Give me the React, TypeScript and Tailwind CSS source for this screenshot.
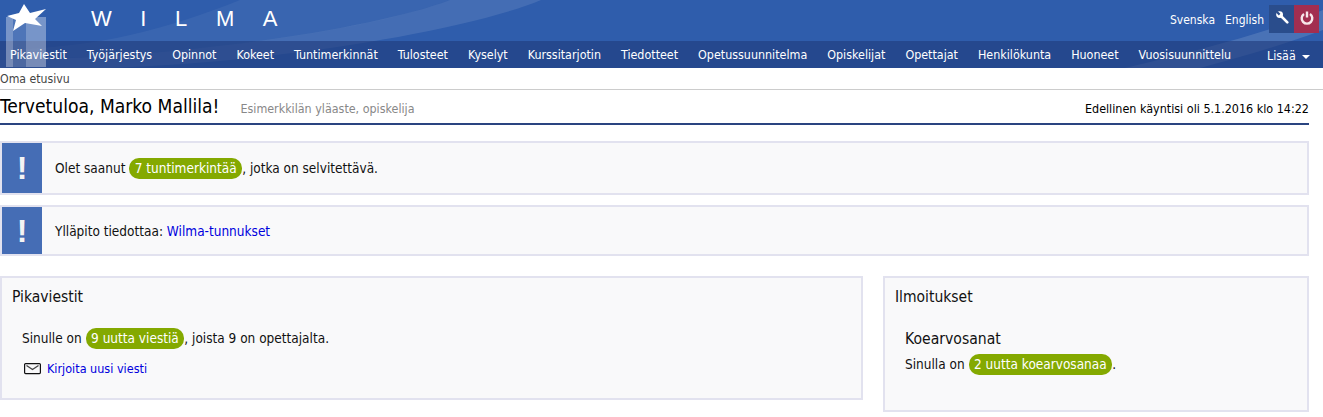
import React from "react";

const navItems = [
  "Pikaviestit",
  "Työjärjestys",
  "Opinnot",
  "Kokeet",
  "Tuntimerkinnät",
  "Tulosteet",
  "Kyselyt",
  "Kurssitarjotin",
  "Tiedotteet",
  "Opetussuunnitelma",
  "Opiskelijat",
  "Opettajat",
  "Henkilökunta",
  "Huoneet",
  "Vuosisuunnittelu",
];

const Badge = ({ children }: { children: React.ReactNode }) => (
  <span className="inline-block h-[21px] rounded-[10px] bg-[#84a900] px-[5.5px] leading-[21px] text-white">{children}</span>
);

const Notice = ({ children, height }: { children: React.ReactNode; height: string }) => (
  <div className={`flex w-[1309px] border-2 border-[#e2e2ef] bg-[#f9f9fa] ${height}`}>
    <div className="flex w-[40px] items-center justify-center bg-[#456db5] font-['Liberation_Sans',sans-serif] text-[32px] font-bold leading-none text-[#f4f4f4]">!</div>
    <div className="flex items-center pl-[13px] pt-[1px] text-[13.5px]">
      <p>{children}</p>
    </div>
  </div>
);

const Header = () => (
  <header className="relative h-[68px] overflow-hidden bg-[#2f5dac]">
    <svg className="absolute left-0 top-0" width="1323" height="68" viewBox="0 0 1323 68">
      <path d="M0 60 C180 58 370 30 450 0 L541 0 C470 30 280 62 110 68 L0 68 Z" fill="#ffffff" fillOpacity="0.1" />
      <path d="M0 50 C100 48 170 28 240 0 L450 0 C370 30 200 56 0 60 Z" fill="#ffffff" fillOpacity="0.05" />
      <path d="M1125 68 C1210 48 1280 28 1323 10 L1323 30 C1280 46 1230 60 1200 68 Z" fill="#ffffff" fillOpacity="0.13" />
    </svg>
    <div className="relative flex h-[41px] items-start">
      <span className="ml-[91px] mt-[6px] font-['Liberation_Sans',sans-serif] text-[22px] leading-[25px] tracking-[28.6px] text-white">WILMA</span>
      <div className="ml-auto mr-[4px] mt-[5px] flex items-start">
        <a className="mr-[10px] mt-[7px] text-white">Svenska</a>
        <a className="mr-[5px] mt-[7px] text-white">English</a>
        <div className="flex h-[28px] w-[25px] items-center justify-center bg-[#2a4d8c] pb-[3px] pl-[1px]">
          <svg width="13" height="13" viewBox="0 0 13 13" fill="none">
            <path d="M4 4 L11.3 11.3" stroke="#fff" strokeWidth="2.6" strokeLinecap="round" />
            <circle cx="3.6" cy="3.6" r="3.4" fill="#fff" />
            <path d="M0.8 0.8 L3.6 3.6" stroke="#2a4d8c" strokeWidth="2.2" />
          </svg>
        </div>
        <div className="flex h-[28px] w-[25px] items-center justify-center bg-[#a22e50] pb-[2px]">
          <svg width="14" height="14" viewBox="0 0 14 14" fill="none" stroke="#f7e6ea" strokeWidth="2.4">
            <path d="M4 3 A5.3 5.3 0 1 0 10 3" />
            <path d="M7 0.5 L7 6.5" />
          </svg>
        </div>
      </div>
    </div>
    <nav className="relative flex h-[27px] items-center bg-[#1f3a7a]/60 text-[12.4px] text-white">
      <ul className="flex">
        {navItems.map((item) => (
          <li key={item} className="px-[10px]">{item}</li>
        ))}
      </ul>
      <div className="absolute left-[1267px] top-[1px] flex h-[27px] items-center">
        Lisää
        <span className="ml-[6px] mt-[3px] h-0 w-0 border-x-[4px] border-t-[4px] border-x-transparent border-t-white" />
      </div>
    </nav>
    <div className="absolute left-[6px] top-[17px] flex h-[50px] w-[40px]">
      <div className="h-full w-[7px] bg-white/35" />
      <div className="h-full w-[13px] bg-white/15" />
      <div className="h-full w-[20px] bg-white/35" />
    </div>
    <svg className="absolute left-0 top-0" width="50" height="34" viewBox="0 0 50 34">
      <path d="M24 4 L19 13 L7 16 L16 20 L13 31 L25 23 L42 26 L35 19 L46 9 L30 13 Z" fill="#fff" />
    </svg>
  </header>
);

export default function App() {
  return (
    <div className="h-[417px] w-[1323px] overflow-hidden bg-white font-['DejaVu_Sans',sans-serif] text-[12px] leading-[16px] text-[#111] [font-stretch:condensed]">
      <Header />
      <div className="h-[22px] border-b border-[#ccc] pt-[3px] text-[12.2px] text-[#444]">Oma etusivu</div>
      <div className="flex h-[35px] w-[1309px] items-center border-b-2 border-[#2a4480] pt-[1px]">
        <h1 className="text-[19.1px] leading-[22px] text-black">Tervetuloa, Marko Mallila!</h1>
        <span className="ml-[21px] mt-[3px] text-[12.4px] text-[#888]">Esimerkkilän yläaste, opiskelija</span>
        <span className="ml-auto mt-[3px] text-[12.45px] text-black">Edellinen käyntisi oli 5.1.2016 klo 14:22</span>
      </div>
      <div className="mt-[16px] flex flex-col gap-[10px]">
        <Notice height="h-[54px]">
          Olet saanut <Badge>7 tuntimerkintää</Badge>, jotka on selvitettävä.
        </Notice>
        <Notice height="h-[51px]">
          Ylläpito tiedottaa: <a className="text-[#0000dd]">Wilma-tunnukset</a>
        </Notice>
      </div>
      <div className="mt-[20px] flex w-[1309px] items-start justify-between">
        <section className="h-[124px] w-[863px] border-2 border-[#e2e2ef] bg-[#f9f9fa] pl-[10px] pt-[10px]">
          <h2 className="text-[15.5px] leading-[18px]">Pikaviestit</h2>
          <p className="ml-[10px] mt-[22px] text-[13.5px] leading-[21px]">
            Sinulle on <Badge>9 uutta viestiä</Badge>, joista 9 on opettajalta.
          </p>
          <div className="ml-[12px] mt-[12px] flex items-center gap-[6px] text-[12.5px]">
            <svg width="17" height="12" viewBox="0 0 17 12" fill="none">
              <rect x="0.6" y="0.6" width="15.8" height="10" rx="1" stroke="#111" strokeWidth="1.2" />
              <path d="M2.5 2.5 L8.5 6.5 L14.5 2.5" stroke="#444" strokeWidth="1.3" />
            </svg>
            <a className="text-[#0000dd]">Kirjoita uusi viesti</a>
          </div>
        </section>
        <section className="h-[136px] w-[426px] border-2 border-[#e2e2ef] bg-[#f9f9fa] pl-[10px] pt-[10px]">
          <h2 className="text-[15.5px] leading-[18px]">Ilmoitukset</h2>
          <h3 className="ml-[10px] mt-[24px] text-[15.6px] leading-[18px]">Koearvosanat</h3>
          <p className="ml-[10px] mt-[6px] text-[13.5px] leading-[21px]">
            Sinulla on <Badge>2 uutta koearvosanaa</Badge>.
          </p>
        </section>
      </div>
    </div>
  );
}
